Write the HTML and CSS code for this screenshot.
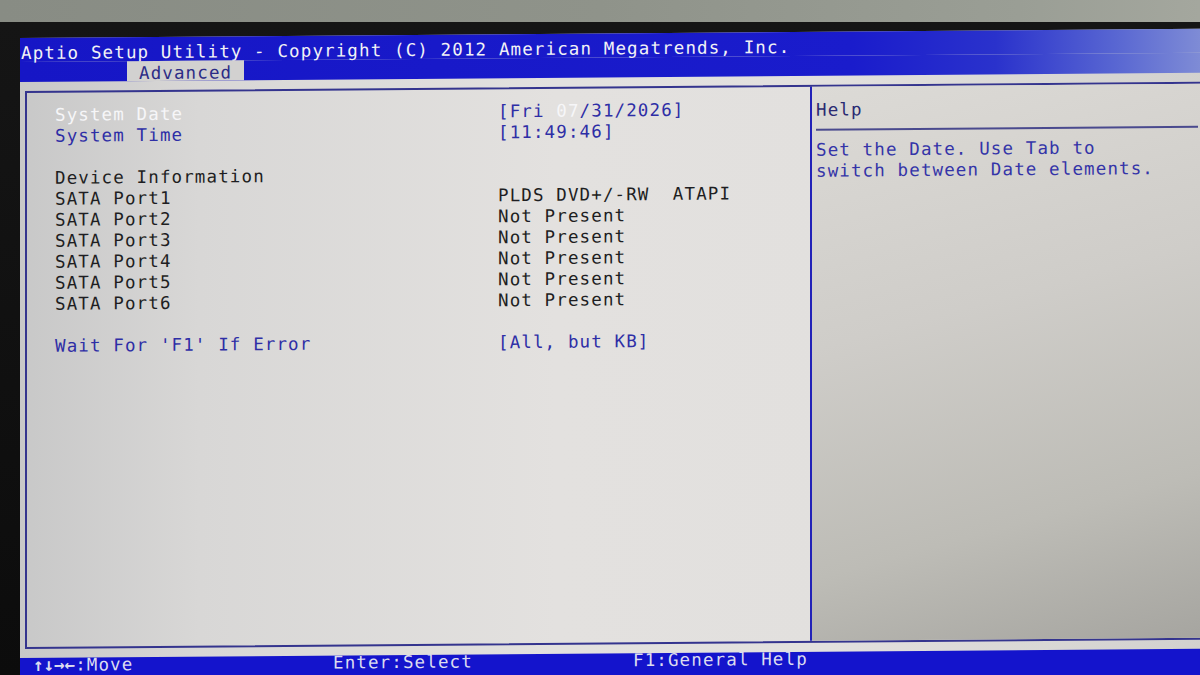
FILE: index.html
```html
<!DOCTYPE html>
<html lang="en">
<head>
<meta charset="UTF-8">
<meta name="viewport" content="width=device-width, initial-scale=1.0">
<title>Aptio Setup Utility</title>
<link rel="stylesheet" href="styles.css">
</head>
<body>

<div class="wall"></div>
<div class="monitor">
<div class="screen">
<div class="title">Aptio Setup Utility - Copyright (C) 2012 American Megatrends, Inc.</div>
<div class="tabs"><span class="tab">Advanced</span></div>

<div class="main">
<div class="frame">
<div class="items">
<div class="row">
<span class="label selected">System Date</span>
<span class="value link">[Fri <span class="selected">07</span>/31/2026]</span>
</div>
<div class="row">
<span class="label link">System Time</span>
<span class="value link">[11:49:46]</span>
</div>
<div class="row blank"></div>
<div class="row">
<span class="label">Device Information</span>
</div>
<div class="row">
<span class="label">SATA Port1</span>
<span class="value">PLDS DVD+/-RW  ATAPI</span>
</div>
<div class="row">
<span class="label">SATA Port2</span>
<span class="value">Not Present</span>
</div>
<div class="row">
<span class="label">SATA Port3</span>
<span class="value">Not Present</span>
</div>
<div class="row">
<span class="label">SATA Port4</span>
<span class="value">Not Present</span>
</div>
<div class="row">
<span class="label">SATA Port5</span>
<span class="value">Not Present</span>
</div>
<div class="row">
<span class="label">SATA Port6</span>
<span class="value">Not Present</span>
</div>
<div class="row blank"></div>
<div class="row">
<span class="label link">Wait For 'F1' If Error</span>
<span class="value link">[All, but KB]</span>
</div>
</div>

<div class="help">
<div class="help-title">Help</div>
<div class="help-text">Set the Date. Use Tab to
switch between Date elements.</div>
</div>
</div>
</div>

<div class="footer">
<span><span class="arrows">↑↓→←</span>:Move</span>
<span>Enter:Select</span>
<span>F1:General Help</span>
</div>
</div>
</div>

</body>
</html>
```

FILE: styles.css
```css
html, body {
    margin: 0;
    padding: 0;
    width: 1200px;
    height: 675px;
    overflow: hidden;
    background-color: #0e0e0e;
}

body {
    font-family: "DejaVu Sans Mono", "Liberation Mono", monospace;
    font-size: 17.5px;
    letter-spacing: 1.12px;
}

.wall {
    height: 22px;
    background: linear-gradient(90deg, #888c84 0%, #8f938a 50%, #9a9e95 85%, #a4a79e 100%);
}

.monitor {
    height: 653px;
    padding: 16px 0 0 20px;
    box-sizing: border-box;
    background: linear-gradient(180deg, #151515, #0c0c0c);
}

.screen {
    width: 1190px;
    background: linear-gradient(90deg, #c8c8c8 0%, #d8d7d6 15%, #e3e1df 45%, #e2e0de 68%, #d2d1ce 100%);
    transform: skewY(-0.45deg);
    transform-origin: left top;
}

.title {
    height: 24px;
    padding: 7px 0 0 1px;
    box-sizing: border-box;
    line-height: 17px;
    white-space: pre;
    color: #f2f2f6;
    background: linear-gradient(90deg, #1616c6 0%, #1a1ccc 70%, #2a32cc 82%, #5866d2 92%, #8390d6 100%);
}

.tabs {
    height: 20px;
    padding-left: 107px;
    background: linear-gradient(90deg, #1616c6 0%, #1a1ccc 70%, #2a32cc 82%, #5866d2 92%, #8390d6 100%);
}

.tab {
    display: inline-block;
    width: 117px;
    height: 20px;
    padding: 2px 0 0 12px;
    box-sizing: border-box;
    line-height: 21px;
    color: #2c2c86;
    background-color: #d2d1d0;
}

.main {
    height: 576px;
    padding: 9px 8px 9px 5px;
    box-sizing: border-box;
}

.frame {
    height: 100%;
    box-sizing: border-box;
    border: 2px solid #34348e;
    display: grid;
    grid-template-columns: 783px 1fr;
}

.items {
    padding: 12px 0 0 28px;
}

.row {
    display: grid;
    grid-template-columns: 443px auto;
    height: 21px;
    line-height: 21px;
    white-space: pre;
    color: #1e1e22;
}

.link {
    color: #2e2ea6;
}

.selected {
    color: #f6f6f8;
}

.help {
    border-left: 2px solid #2222b8;
    padding: 13px 2px 0 4px;
    background: linear-gradient(165deg, #dcdad6 0%, #cfcdc9 40%, #bdbcb6 75%, #a6a5a0 100%);
}

.help-title {
    line-height: 21px;
    padding-bottom: 8px;
    border-bottom: 2px solid #4a4a8e;
    color: #2a2a72;
}

.help-text {
    padding-top: 9px;
    line-height: 21px;
    white-space: pre;
    color: #3434a8;
}

.footer {
    height: 32px;
    padding-left: 13px;
    line-height: 15px;
    display: grid;
    grid-template-columns: 300px 300px auto;
    color: #dcdcf0;
    background-color: #1414cc;
}

.arrows {
    font-weight: bold;
    letter-spacing: 0;
}
```
